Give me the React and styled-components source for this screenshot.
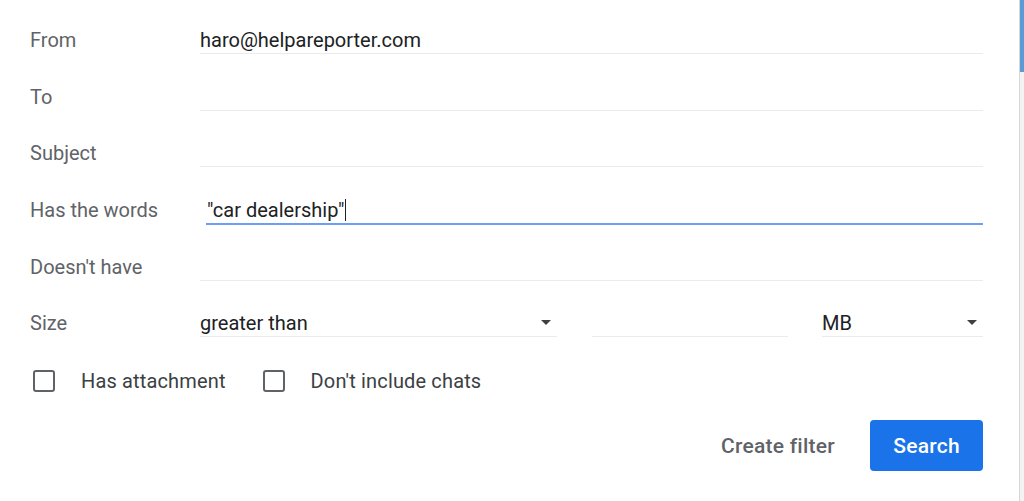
import React from "react";
import styled, { createGlobalStyle } from "styled-components";

const Global = createGlobalStyle`
  html, body { margin: 0; padding: 0; background: #fff; }
  body { font-family: Roboto, "Noto Sans", Arial, sans-serif; }
  * { box-sizing: border-box; }
`;

const Page = styled.div`
  display: flex;
  width: 1024px;
  height: 501px;
  overflow: hidden;
  background: #fff;
`;

const Content = styled.div`
  flex: 1;
  padding: 12px 36px 0 30px;
  display: flex;
  flex-direction: column;
`;

const Scrollbar = styled.div`
  width: 5px;
  border-left: 1px solid #d6d6d6;
  background: #f3f3f3;
  display: flex;
  flex-direction: column;
`;

const Thumb = styled.div`
  height: 72px;
  background: #5b9bd5;
`;

const Row = styled.div`
  display: grid;
  grid-template-columns: 170px 1fr;
  align-items: center;
  height: 56.6px;
`;

const Label = styled.div`
  font-size: 20px;
  color: #5f6368;
  line-height: 1;
`;

const Field = styled.div`
  height: 28px;
  display: flex;
  align-items: center;
  border-bottom: ${(p) => (p.$focused ? "2px solid #6a9ff2" : "1px solid #ebebeb")};
  padding-left: ${(p) => (p.$focused ? "1px" : "0")};
  margin-left: ${(p) => (p.$focused ? "6px" : "0")};
  margin-top: ${(p) => (p.$focused ? "2px" : "0")};
  font-size: 20px;
  color: #202124;
  line-height: 1;
`;

const Caret = styled.span`
  display: inline-block;
  width: 1px;
  height: 22px;
  background: #202124;
  margin-left: 1px;
`;

const SizeGrid = styled.div`
  display: grid;
  grid-template-columns: 357px 196px 161px;
  justify-content: space-between;
  align-items: center;
`;

const Select = styled(Field)`
  justify-content: space-between;
  padding-right: 6px;
`;

const Arrow = styled.span`
  width: 0;
  height: 0;
  border-left: 5px solid transparent;
  border-right: 5px solid transparent;
  border-top: 5px solid #3c4043;
`;

const CheckRow = styled.div`
  display: flex;
  align-items: center;
  height: 56.6px;
  padding-left: 3px;
  padding-top: 3px;
`;

const CheckItem = styled.label`
  display: flex;
  align-items: center;
  gap: 26px;
  margin-right: 37px;
  font-size: 20px;
  letter-spacing: 0.15px;
  color: #3c4043;
  line-height: 1;
`;

const Box = styled.span`
  width: 22px;
  height: 22px;
  border: 2.5px solid #5f6368;
  border-radius: 3px;
`;

const Actions = styled.div`
  display: flex;
  justify-content: flex-end;
  align-items: center;
  margin-top: 12px;
  gap: 35px;
`;

const TextButton = styled.button`
  border: none;
  background: none;
  padding: 0;
  font-family: inherit;
  font-size: 21px;
  font-weight: 500;
  letter-spacing: 0.25px;
  color: #5f6368;
`;

const PrimaryButton = styled.button`
  width: 113px;
  height: 51px;
  border: none;
  border-radius: 4px;
  background: #1a73e8;
  color: #fff;
  font-family: inherit;
  font-size: 21px;
  font-weight: 500;
  letter-spacing: 0.25px;
`;

export default function App() {
  return (
    <>
      <Global />
      <Page>
        <Content>
          <Row>
            <Label>From</Label>
            <Field>haro@helpareporter.com</Field>
          </Row>
          <Row>
            <Label>To</Label>
            <Field />
          </Row>
          <Row>
            <Label>Subject</Label>
            <Field />
          </Row>
          <Row>
            <Label>Has the words</Label>
            <Field $focused>
              "car dealership"<Caret />
            </Field>
          </Row>
          <Row>
            <Label>Doesn't have</Label>
            <Field />
          </Row>
          <Row>
            <Label>Size</Label>
            <SizeGrid>
              <Select>
                greater than
                <Arrow />
              </Select>
              <Field />
              <Select>
                MB
                <Arrow />
              </Select>
            </SizeGrid>
          </Row>
          <CheckRow>
            <CheckItem>
              <Box />
              Has attachment
            </CheckItem>
            <CheckItem>
              <Box />
              Don't include chats
            </CheckItem>
          </CheckRow>
          <Actions>
            <TextButton>Create filter</TextButton>
            <PrimaryButton>Search</PrimaryButton>
          </Actions>
        </Content>
        <Scrollbar>
          <Thumb />
        </Scrollbar>
      </Page>
    </>
  );
}
